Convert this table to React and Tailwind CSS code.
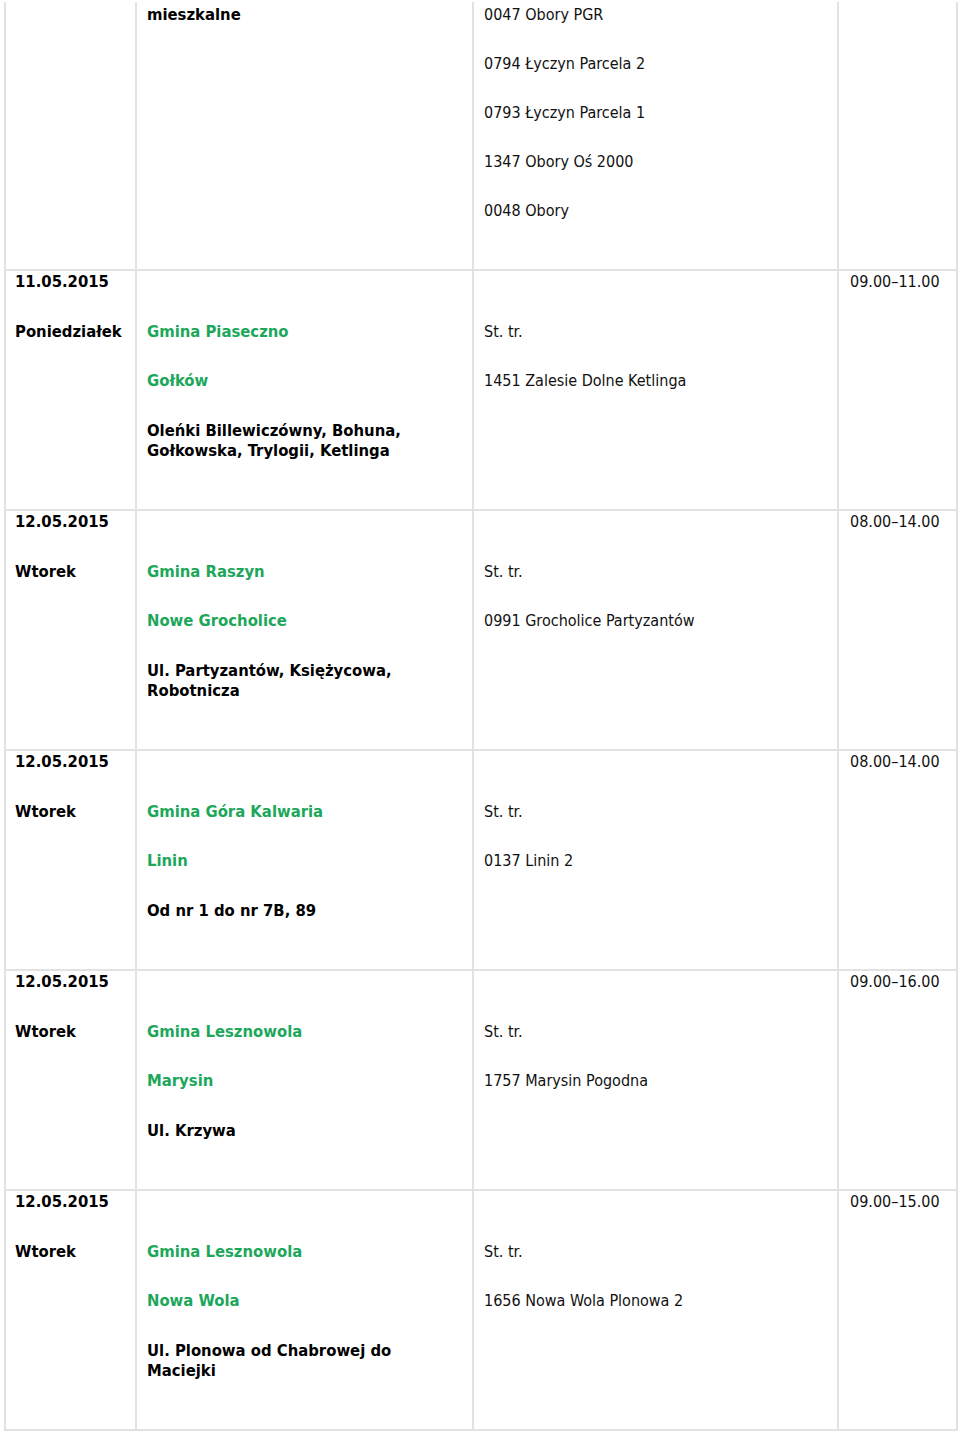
import React from "react";

const rows = [
  {
    first: true,
    day: [],
    place: [{ text: "mieszkalne" }],
    station: ["0047 Obory PGR", "0794 Łyczyn Parcela 2", "0793 Łyczyn Parcela 1", "1347 Obory Oś 2000", "0048 Obory"],
    time: "",
  },
  {
    day: ["11.05.2015", "Poniedziałek"],
    place: [
      { text: "" },
      { text: "Gmina Piaseczno", green: true },
      { text: "Gołków", green: true },
      { text: "Oleńki Billewiczówny, Bohuna, Gołkowska, Trylogii, Ketlinga" },
    ],
    station: ["", "St. tr.", "1451 Zalesie Dolne Ketlinga"],
    time: "09.00–11.00",
  },
  {
    day: ["12.05.2015", "Wtorek"],
    place: [
      { text: "" },
      { text: "Gmina Raszyn", green: true },
      { text: "Nowe Grocholice", green: true },
      { text: "Ul. Partyzantów, Księżycowa, Robotnicza" },
    ],
    station: ["", "St. tr.", "0991 Grocholice Partyzantów"],
    time: "08.00–14.00",
  },
  {
    day: ["12.05.2015", "Wtorek"],
    place: [
      { text: "" },
      { text: "Gmina Góra Kalwaria", green: true },
      { text: "Linin", green: true },
      { text: "Od nr 1 do nr 7B, 89" },
    ],
    station: ["", "St. tr.", "0137 Linin 2"],
    time: "08.00–14.00",
  },
  {
    day: ["12.05.2015", "Wtorek"],
    place: [
      { text: "" },
      { text: "Gmina Lesznowola", green: true },
      { text: "Marysin", green: true },
      { text: "Ul. Krzywa" },
    ],
    station: ["", "St. tr.", "1757 Marysin Pogodna"],
    time: "09.00–16.00",
  },
  {
    day: ["12.05.2015", "Wtorek"],
    place: [
      { text: "" },
      { text: "Gmina Lesznowola", green: true },
      { text: "Nowa Wola", green: true },
      { text: "Ul. Plonowa od Chabrowej do Maciejki" },
    ],
    station: ["", "St. tr.", "1656 Nowa Wola Plonowa 2"],
    time: "09.00–15.00",
  },
];

const Line = ({ children, tight, className = "" }) => (
  <p className={`leading-[20px] min-h-[20px] ${tight ? "mb-[29px]" : "mb-[29.5px]"} ${className}`}>{children}</p>
);

const App = () => {
  return (
    <div
      className="w-[960px] h-[1432px] bg-white pt-[2px] text-[16px] text-[#111]"
      style={{ fontFamily: '"DejaVu Sans Condensed", "DejaVu Sans", Tahoma, sans-serif', fontStretch: "condensed" }}
    >
      <table className="ml-[4px] w-[952px] table-fixed border-collapse">
        <colgroup>
          <col className="w-[131px]" />
          <col className="w-[337px]" />
          <col className="w-[365px]" />
          <col className="w-[119px]" />
        </colgroup>
        <tbody>
          {rows.map((row, i) => {
            // first row is cut off at the top of the page
            const edge = row.first ? "border-t-0 pt-[3px] pb-[19px]" : "pt-[1px] pb-[19px]";
            const tight = !!row.first;
            return (
              <tr key={i}>
                <td className={`align-top border-2 border-[#e2e2e2] pl-[9px] ${edge}`}>
                  {row.day.map((d, j) => (
                    <Line key={j} tight={tight} className="font-bold text-black text-[16.5px]">
                      {d}
                    </Line>
                  ))}
                </td>
                <td className={`align-top border-2 border-[#e2e2e2] pl-[10px] pr-[22px] ${edge}`}>
                  {row.place.map((p, j) => (
                    <Line
                      key={j}
                      tight={tight}
                      className={`font-bold text-[16.5px] ${p.green ? "text-[#1ca75b]" : "text-black"}`}
                    >
                      {p.text}
                    </Line>
                  ))}
                </td>
                <td className={`align-top border-2 border-[#e2e2e2] pl-[10px] ${edge}`}>
                  {row.station.map((s, j) => (
                    <Line key={j} tight={tight}>
                      {s}
                    </Line>
                  ))}
                </td>
                <td className={`align-top border-2 border-[#e2e2e2] pl-[11px] ${edge}`}>
                  {row.time && <Line tight={tight}>{row.time}</Line>}
                </td>
              </tr>
            );
          })}
        </tbody>
      </table>
    </div>
  );
};

export default App;
